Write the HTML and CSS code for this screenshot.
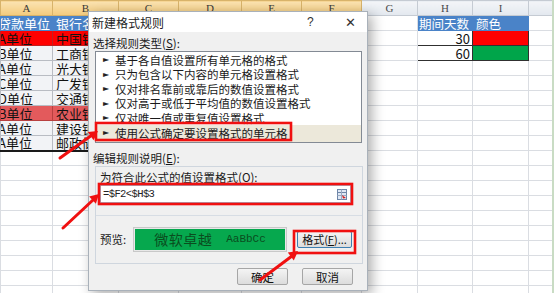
FILE: index.html
```html
<!DOCTYPE html>
<html lang="zh">
<head>
<meta charset="utf-8">
<title>新建格式规则</title>
<link rel="stylesheet" href="styles.css">
</head>
<body>
<div class="screen">
  <table class="sheet">
    <colgroup>
      <col class="w52"><col class="w66"><col class="w60"><col class="w63"><col class="w60"><col class="w60"><col class="w56"><col class="w55"><col class="w56"><col class="w25">
    </colgroup>
    <tr class="hdr">
      <th class="sel">A</th><th class="sel">B</th><th class="sel">C</th><th class="sel">D</th><th class="sel">E</th><th class="sel">F</th><th>G</th><th>H</th><th>I</th><th></th>
    </tr>
    <tr>
      <td class="blue colA">贷款单位</td><td class="blue colB">银行名称</td><td></td><td></td><td></td><td></td><td></td><td class="blue hh">期间天数</td><td class="blue hi">颜色</td><td></td>
    </tr>
    <tr>
      <td class="red colA">A单位</td><td class="red colB">中国银行</td><td></td><td></td><td></td><td></td><td></td><td class="num tl">30</td><td class="redc tr"></td><td></td>
    </tr>
    <tr>
      <td class="pale colA">B单位</td><td class="pale colB">工商银行</td><td></td><td></td><td></td><td></td><td></td><td class="num bl">60</td><td class="green br"></td><td></td>
    </tr>
    <tr>
      <td class="pale colA">A单位</td><td class="pale colB">光大银行</td><td></td><td></td><td></td><td></td><td></td><td></td><td></td><td></td>
    </tr>
    <tr>
      <td class="pale colA">C单位</td><td class="pale colB">广发银行</td><td></td><td></td><td></td><td></td><td></td><td></td><td></td><td></td>
    </tr>
    <tr>
      <td class="pale colA">D单位</td><td class="pale colB">交通银行</td><td></td><td></td><td></td><td></td><td></td><td></td><td></td><td></td>
    </tr>
    <tr>
      <td class="pink colA">B单位</td><td class="pink colB">农业银行</td><td></td><td></td><td></td><td></td><td></td><td></td><td></td><td></td>
    </tr>
    <tr>
      <td class="pale colA">A单位</td><td class="pale colB">建设银行</td><td></td><td></td><td></td><td></td><td></td><td></td><td></td><td></td>
    </tr>
    <tr class="last">
      <td class="pale colA">A单位</td><td class="pale colB">邮政储蓄</td><td></td><td></td><td></td><td></td><td></td><td></td><td></td><td></td>
    </tr>
    <tr><td></td><td></td><td></td><td></td><td></td><td></td><td></td><td></td><td></td><td></td></tr>
    <tr><td></td><td></td><td></td><td></td><td></td><td></td><td></td><td></td><td></td><td></td></tr>
    <tr><td></td><td></td><td></td><td></td><td></td><td></td><td></td><td></td><td></td><td></td></tr>
    <tr><td></td><td></td><td></td><td></td><td></td><td></td><td></td><td></td><td></td><td></td></tr>
    <tr><td></td><td></td><td></td><td></td><td></td><td></td><td></td><td></td><td></td><td></td></tr>
    <tr><td></td><td></td><td></td><td></td><td></td><td></td><td></td><td></td><td></td><td></td></tr>
    <tr><td></td><td></td><td></td><td></td><td></td><td></td><td></td><td></td><td></td><td></td></tr>
    <tr><td></td><td></td><td></td><td></td><td></td><td></td><td></td><td></td><td></td><td></td></tr>
    <tr><td></td><td></td><td></td><td></td><td></td><td></td><td></td><td></td><td></td><td></td></tr>
    <tr><td></td><td></td><td></td><td></td><td></td><td></td><td></td><td></td><td></td><td></td></tr>
  </table>

  <div class="dialog">
    <div class="titlebar">
      <span class="title">新建格式规则</span>
      <span class="help">?</span>
      <span class="close">✕</span>
    </div>
    <div class="body">
      <div class="label l1">选择规则类型(<u>S</u>):</div>
      <div class="listbox">
        <div class="item"><span class="tri">►</span><span class="itxt">基于各自值设置所有单元格的格式</span></div>
        <div class="item"><span class="tri">►</span><span class="itxt">只为包含以下内容的单元格设置格式</span></div>
        <div class="item"><span class="tri">►</span><span class="itxt">仅对排名靠前或靠后的数值设置格式</span></div>
        <div class="item"><span class="tri">►</span><span class="itxt">仅对高于或低于平均值的数值设置格式</span></div>
        <div class="item"><span class="tri">►</span><span class="itxt">仅对唯一值或重复值设置格式</span></div>
        <div class="item active"><span class="tri">►</span><span class="itxt">使用公式确定要设置格式的单元格</span></div>
      </div>
      <div class="label l2">编辑规则说明(<u>E</u>):</div>
      <div class="group">
        <div class="label l3">为符合此公式的值设置格式(<u>O</u>):</div>
        <div class="input">
          <span class="formula">=$F2&lt;$H$3</span>
          <svg class="picker" width="10" height="11" viewBox="0 0 10 11">
            <rect x="0.5" y="0.5" width="9" height="10" fill="#dfe8f5" stroke="#6f86a8"/>
            <line x1="0.5" y1="3.5" x2="9.5" y2="3.5" stroke="#6f86a8"/>
            <line x1="0.5" y1="6.5" x2="9.5" y2="6.5" stroke="#9aaac2"/>
            <line x1="4.5" y1="0.5" x2="4.5" y2="10.5" stroke="#9aaac2"/>
            <path d="M5 6 L9 9 L6 9.5 Z" fill="#d42020"/>
          </svg>
        </div>
        <div class="divider"></div>
        <div class="preview-row">
          <span class="plabel">预览:</span>
          <div class="pbox"><span class="pcn">微软卓越</span><span class="pen">AaBbCc</span></div>
          <button class="btn fmt">格式(<u>F</u>)...</button>
        </div>
      </div>
      <div class="actions">
        <button class="btn">确定</button>
        <button class="btn">取消</button>
      </div>
    </div>
  </div>

  <svg class="marks" width="554" height="293" viewBox="0 0 554 293">
    <g fill="none" stroke="#f01010" stroke-width="2.6">
      <rect x="96" y="123" width="195" height="17"/>
      <rect x="99" y="184" width="253" height="20"/>
      <rect x="294" y="231" width="61" height="22"/>
    </g>
    <g stroke="#f01010" stroke-width="3" stroke-linecap="round">
      <line x1="60" y1="158" x2="92" y2="135"/>
      <line x1="63" y1="228" x2="93" y2="200"/>
      <line x1="260" y1="280" x2="292" y2="256"/>
    </g>
    <g fill="#f01010">
      <polygon points="98,131 93.6,140.3 87.8,132.1"/>
      <polygon points="99,194 95.9,203.8 89.1,196.6"/>
      <polygon points="298,251 293.8,260.5 287.8,252.5"/>
    </g>
  </svg>
</div>
</body>
</html>
```

FILE: styles.css
```css
* { box-sizing: border-box; }

html, body {
  margin: 0;
  padding: 0;
  background: #ffffff;
}

.screen {
  position: relative;
  width: 554px;
  height: 293px;
  overflow: hidden;
  background: #ffffff;
  border-right: 2px solid #c9dcc4;
  font-family: "Noto Sans CJK SC", "Noto Sans", sans-serif;
}

/* ---------- spreadsheet ---------- */
.sheet {
  border-collapse: collapse;
  table-layout: fixed;
  width: 553px;
}
.w52 { width: 52px; }
.w66 { width: 66px; }
.w60 { width: 60px; }
.w63 { width: 63px; }
.w56 { width: 56px; }
.w55 { width: 55px; }
.w25 { width: 25px; }

.sheet tr { height: 15px; }
.sheet td, .sheet th {
  padding: 0;
  border: 1px solid #dadde2;
  height: 15px;
  overflow: hidden;
  white-space: nowrap;
  font-size: 13px;
  line-height: 13px;
  color: #111;
}
.sheet th {
  font-family: "Liberation Serif", "DejaVu Serif", serif;
  font-weight: normal;
  font-size: 11px;
  color: #4a4a4a;
  background: linear-gradient(#f3f5f8, #e3e8ef);
  border-color: #c5cbd3;
  height: 14px;
  line-height: 12px;
}
.sheet th.sel {
  background: linear-gradient(#fbe3b2, #f4cb7c);
  border-color: #d8b36a;
  color: #3a3a3a;
}

.colA { text-indent: -3px; text-align: left; }
.colB { padding-left: 3px !important; text-align: left; }

.blue { background: #4a83c8; color: #ffffff !important; border-color: #4a83c8 !important; }
.red { background: #ff0000; border-color: #c02020 !important; }
.pink { background: #e35a5c; border-color: #b84040 !important; }
.pale { background: #f2f3f6; border-color: #b9bcc3 !important; }
.last td.pale, .last td.colA, .last td.colB { border-bottom: 2px solid #1a1a1a !important; }

.hh { padding-left: 1px !important; font-size: 12.5px !important; }
.hi { padding-left: 3px !important; font-size: 12.5px !important; }
.num { text-align: right; padding-right: 2px !important; }
.redc { background: #ff0000; }
.green { background: #00a54a; }
.tl, .tr, .bl, .br { border-color: #303030 !important; }

/* ---------- dialog ---------- */
.dialog {
  position: absolute;
  left: 88px;
  top: 11px;
  width: 280px;
  height: 280px;
  background: #f0f0f0;
  border: 1px solid #a9b1ba;
  box-shadow: 4px 4px 12px rgba(0, 0, 0, 0.32);
  display: flex;
  flex-direction: column;
  font-size: 11.5px;
  color: #1a1a1a;
}
.titlebar {
  height: 20px;
  background: #ffffff;
  display: flex;
  align-items: center;
  padding-left: 3px;
  font-size: 12px;
}
.title { flex: 1; color: #222; }
.help {
  width: 14px;
  margin-right: 24px;
  font-family: "Liberation Sans", sans-serif;
  font-size: 12px;
  color: #333;
}
.close {
  width: 14px;
  margin-right: 8px;
  font-size: 13px;
  color: #333;
  font-family: "DejaVu Sans", sans-serif;
}
.body {
  display: flex;
  flex-direction: column;
  padding: 0 4px 0 6px;
}
.label {
  height: 14px;
  line-height: 14px;
  white-space: nowrap;
}
.label u { text-decoration: underline; }
.l1 { margin-top: 4px; margin-left: -2px; }
.listbox {
  margin-top: 1px;
  width: 267px;
  height: 92px;
  background: #ffffff;
  border: 1px solid #838a94;
  padding-top: 1px;
}
.item {
  height: 14.5px;
  line-height: 14.5px;
  white-space: nowrap;
  padding-left: 7px;
  display: flex;
  align-items: center;
  overflow: hidden;
}
.tri {
  width: 12px;
  flex: none;
  font-size: 8px;
  line-height: 8px;
  color: #222;
  font-family: "DejaVu Sans", sans-serif;
}
.itxt { line-height: 13px; }
.item.active { background: #ece8da; height: 17px; margin-top: -1px; }
.l2 { margin-top: 8px; margin-left: -2px; }
.group {
  margin-top: 1px;
  width: 268px;
  height: 98px;
  border: 1px solid #cfd6de;
  display: flex;
  flex-direction: column;
}
.l3 { margin-top: 4px; margin-left: 4px; height: 13px; line-height: 13px; }
.input {
  margin-top: 1px;
  margin-left: 4px;
  width: 251px;
  height: 18px;
  background: #ffffff;
  border: 1px solid #a4b3c6;
  display: flex;
  align-items: center;
  padding-left: 2px;
  padding-right: 3px;
}
.formula {
  flex: 1;
  font-family: "Liberation Mono", monospace;
  font-size: 10.5px;
  letter-spacing: -0.6px;
  color: #222;
}
.picker { display: block; }
.divider {
  margin-top: 12px;
  height: 1px;
  background: #d7dde4;
}
.preview-row {
  display: flex;
  align-items: center;
  height: 46px;
  padding-left: 4px;
}
.plabel { width: 33px; }
.pbox {
  width: 154px;
  height: 25px;
  border: 1px solid #c8c8c8;
  background: #06a84e;
  box-shadow: inset 0 0 0 1px #e8e8e8;
  display: flex;
  align-items: center;
  justify-content: center;
  gap: 14px;
  color: #0a4d1e;
}
.pcn { font-size: 14px; letter-spacing: 0.5px; }
.pen { font-family: "Liberation Mono", monospace; font-size: 11px; }
.btn {
  font-family: "Noto Sans CJK SC", sans-serif;
  font-size: 11.5px;
  color: #111;
  background: linear-gradient(#f4f4f4, #dcdcdc);
  border: 1px solid #a6a6a6;
  border-radius: 2px;
  padding: 0;
  height: 17px;
  line-height: 14px;
}
.btn.fmt {
  width: 55px;
  margin-left: 10px;
  border-color: #3c7fb1;
  font-size: 11px;
}
.actions {
  display: flex;
  justify-content: flex-end;
  gap: 14px;
  margin-top: 4px;
  padding-right: 10px;
}
.actions .btn { width: 51px; }

/* ---------- annotations ---------- */
.marks {
  position: absolute;
  left: 0;
  top: 0;
  pointer-events: none;
}
```
